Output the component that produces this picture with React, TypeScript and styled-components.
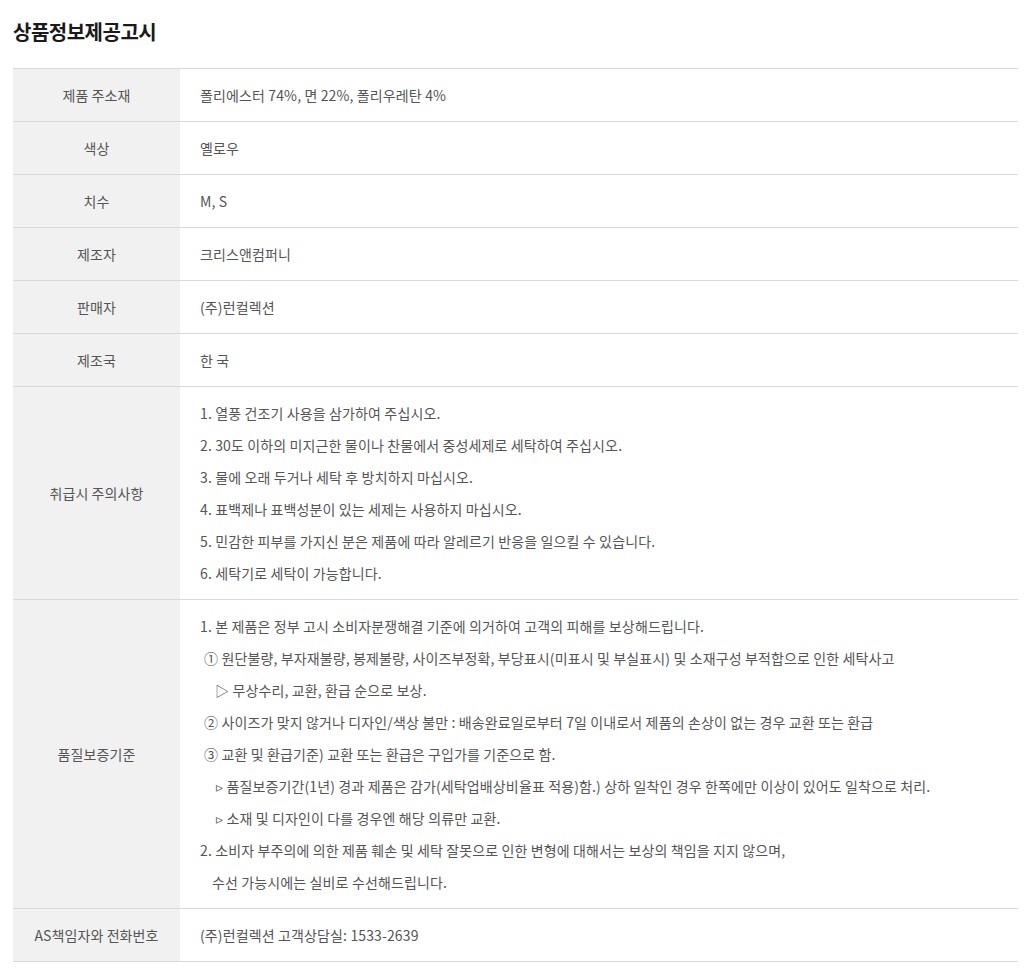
import styled, { createGlobalStyle } from 'styled-components';

interface IRow {
  label: string;
  lines: { text: string; indent?: number }[];
}

const rows: IRow[] = [
  { label: '제품 주소재', lines: [{ text: '폴리에스터 74%, 면 22%, 폴리우레탄 4%' }] },
  { label: '색상', lines: [{ text: '옐로우' }] },
  { label: '치수', lines: [{ text: 'M, S' }] },
  { label: '제조자', lines: [{ text: '크리스앤컴퍼니' }] },
  { label: '판매자', lines: [{ text: '(주)런컬렉션' }] },
  { label: '제조국', lines: [{ text: '한 국' }] },
  {
    label: '취급시 주의사항',
    lines: [
      { text: '1. 열풍 건조기 사용을 삼가하여 주십시오.' },
      { text: '2. 30도 이하의 미지근한 물이나 찬물에서 중성세제로 세탁하여 주십시오.' },
      { text: '3. 물에 오래 두거나 세탁 후 방치하지 마십시오.' },
      { text: '4. 표백제나 표백성분이 있는 세제는 사용하지 마십시오.' },
      { text: '5. 민감한 피부를 가지신 분은 제품에 따라 알레르기 반응을 일으킬 수 있습니다.' },
      { text: '6. 세탁기로 세탁이 가능합니다.' },
    ],
  },
  {
    label: '품질보증기준',
    lines: [
      { text: '1. 본 제품은 정부 고시 소비자분쟁해결 기준에 의거하여 고객의 피해를 보상해드립니다.' },
      { text: '① 원단불량, 부자재불량, 봉제불량, 사이즈부정확, 부당표시(미표시 및 부실표시) 및 소재구성 부적합으로 인한 세탁사고', indent: 4 },
      { text: '▷ 무상수리, 교환, 환급 순으로 보상.', indent: 15 },
      { text: '② 사이즈가 맞지 않거나 디자인/색상 불만 : 배송완료일로부터 7일 이내로서 제품의 손상이 없는 경우 교환 또는 환급', indent: 4 },
      { text: '③ 교환 및 환급기준) 교환 또는 환급은 구입가를 기준으로 함.', indent: 4 },
      { text: '▹ 품질보증기간(1년) 경과 제품은 감가(세탁업배상비율표 적용)함.) 상하 일착인 경우 한쪽에만 이상이 있어도 일착으로 처리.', indent: 16 },
      { text: '▹ 소재 및 디자인이 다를 경우엔 해당 의류만 교환.', indent: 16 },
      { text: '2. 소비자 부주의에 의한 제품 훼손 및 세탁 잘못으로 인한 변형에 대해서는 보상의 책임을 지지 않으며,' },
      { text: '수선 가능시에는 실비로 수선해드립니다.', indent: 12 },
    ],
  },
  { label: 'AS책임자와 전화번호', lines: [{ text: '(주)런컬렉션 고객상담실: 1533-2639' }] },
];

function App() {
  return (
    <PageDiv>
      <GlobalStyle />
      <TitleH2>상품정보제공고시</TitleH2>
      <InfoTable>
        <tbody>
          {rows.map((row) => (
            <tr key={row.label}>
              <LabelTh>{row.label}</LabelTh>
              <ValueTd>
                {row.lines.map((line, i) => (
                  <LineDiv key={i} $indent={line.indent ?? 0}>
                    {line.text}
                  </LineDiv>
                ))}
              </ValueTd>
            </tr>
          ))}
        </tbody>
      </InfoTable>
    </PageDiv>
  );
}

const GlobalStyle = createGlobalStyle`
  body {
    margin: 0;
    background: #fff;
    font-family: 'Noto Sans CJK KR', 'Noto Sans', sans-serif;
  }
`;

const PageDiv = styled.div`
  padding: 17px 10px 0 13px;
`;

const TitleH2 = styled.h2`
  margin: 0 0 21px;
  font-size: 20px;
  line-height: 30px;
  font-weight: 700;
  color: #1a1a1a;
  letter-spacing: -0.5px;
`;

const InfoTable = styled.table`
  width: 1005px;
  border-collapse: collapse;
  border-top: 1px solid #d9d9d9;
  font-size: 14px;
  color: #555;
`;

const LabelTh = styled.th`
  width: 167px;
  box-sizing: border-box;
  background: #f1f1f1;
  font-weight: 400;
  text-align: center;
  vertical-align: middle;
  border-bottom: 1px solid #d9d9d9;
  padding: 10px 0;
  line-height: 32px;
  letter-spacing: 0.1px;
`;

const ValueTd = styled.td`
  padding: 10px 20px;
  border-bottom: 1px solid #d9d9d9;
  vertical-align: middle;
  letter-spacing: 0.13px;
`;

const LineDiv = styled.div<{ $indent: number }>`
  line-height: 32px;
  padding-left: ${(p) => p.$indent}px;
  white-space: nowrap;
`;

export default App;
